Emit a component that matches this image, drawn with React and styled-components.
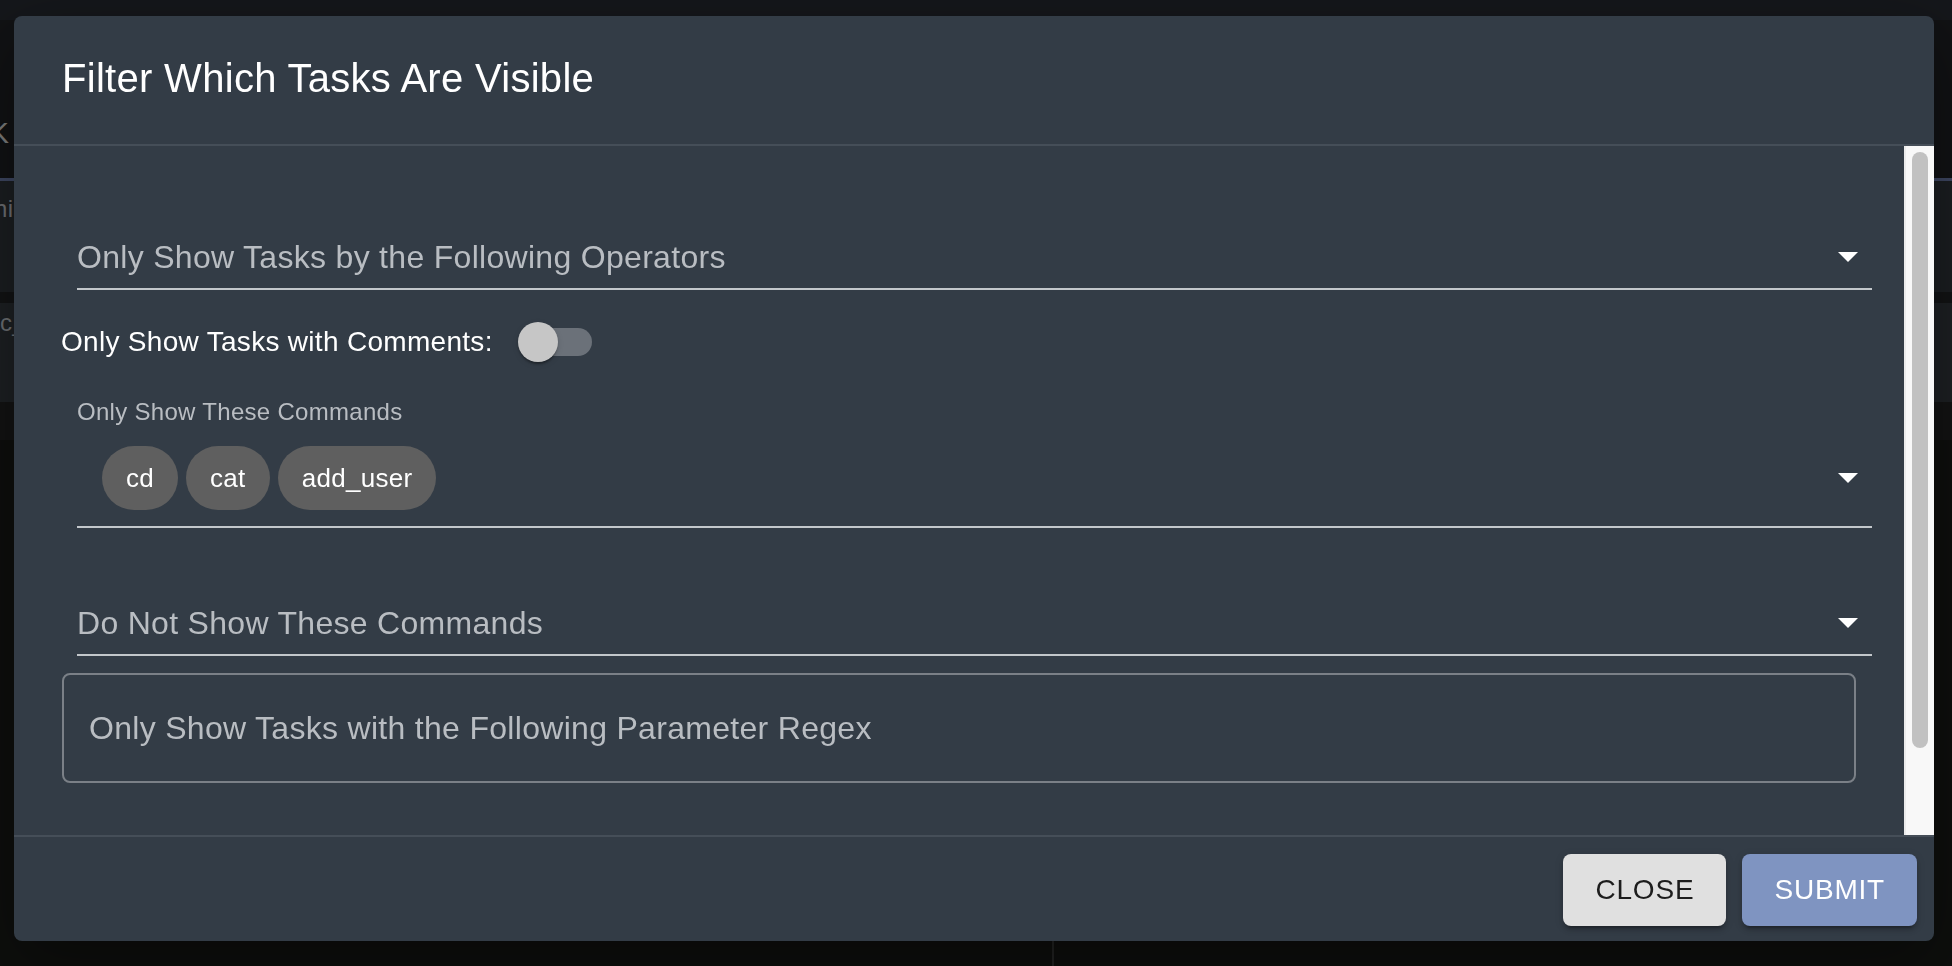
import React from 'react'
import styled, { createGlobalStyle } from 'styled-components'

const GlobalStyle = createGlobalStyle`
    html, body {
        margin: 0;
        padding: 0;
        height: 100%;
    }

    body {
        background: #0e0f0d;
        font-family: "Liberation Sans", Arial, sans-serif;
        letter-spacing: 0.3px;
        overflow: hidden;
    }
`

// the app behind the backdrop
const Page = styled.div`
    display: flex;
    flex-direction: column;
    height: 100vh;
`

const Band = styled.div`
    height: ${p => p.$h}px;
    background: ${p => p.$bg};
    padding-top: ${p => p.$pt || 0}px;
    box-sizing: border-box;
    overflow: hidden;
`

const BgText = styled.div`
    font-size: ${p => p.$size || 24}px;
    line-height: 1;
    color: ${p => p.$color || '#6d7074'};
    margin-left: ${p => p.$offset || 0}px;
    white-space: nowrap;
`

const Lower = styled.div`
    flex: 1;
    display: grid;
    grid-template-columns: 1054px 1fr;
`

const Column = styled.div`
    border-right: ${p => (p.$divider ? '2px solid #222322' : 'none')};
`

// dialog
const Dialog = styled.div`
    position: fixed;
    top: 16px;
    left: 14px;
    width: 1920px;
    height: 925px;
    display: flex;
    flex-direction: column;
    background: #333c46;
    border-radius: 8px;
    overflow: hidden;
    box-shadow: 0 22px 70px rgba(0, 0, 0, 0.4);
`

const Title = styled.h2`
    margin: 0;
    height: 128px;
    box-sizing: border-box;
    padding: 0 48px 4px;
    display: flex;
    align-items: center;
    font-size: 40px;
    font-weight: 400;
    color: #ffffff;
`

const Divider = styled.div`
    height: 2px;
    background: #454e58;
    flex-shrink: 0;
`

const Body = styled.div`
    flex: 1;
    min-height: 0;
    display: flex;
`

const Content = styled.div`
    flex: 1;
    min-width: 0;
    display: flex;
    flex-direction: column;
    padding: 32px 48px;
    overflow: hidden;
`

const ScrollTrack = styled.div`
    width: 30px;
    flex-shrink: 0;
    box-sizing: border-box;
    background: #f8f8f8;
    border-left: 2px solid #ebebeb;
    padding: 6px 6px 0 6px;
`

const ScrollThumb = styled.div`
    height: 596px;
    background: #c1c1c1;
    border-radius: 8px;
`

const UnderlineField = styled.div`
    margin: ${p => p.$mt}px -16px 0 15px;
    padding: 40px 0 8px;
    border-bottom: 2px solid #c3c7cb;
    display: flex;
    align-items: center;
    flex-shrink: 0;
`

const Placeholder = styled.div`
    flex: 1;
    font-size: 32px;
    line-height: 46px;
    color: #b9bdc2;
`

const Arrow = styled.svg`
    width: 20px;
    height: 10px;
    margin-right: 14px;
    flex-shrink: 0;
`

const SwitchRow = styled.label`
    margin-top: 14px;
    height: 76px;
    display: flex;
    align-items: center;
    flex-shrink: 0;
    margin-left: -1px;
`

const SwitchLabel = styled.span`
    font-size: 28px;
    color: #ffffff;
`

const Switch = styled.span`
    position: relative;
    width: 68px;
    height: 28px;
    margin-left: 31px;
    border-radius: 14px;
    background: #6b7179;

    &::after {
        content: '';
        position: absolute;
        left: -6px;
        top: -6px;
        width: 40px;
        height: 40px;
        border-radius: 50%;
        background: #c6c6c6;
        box-shadow: 0 4px 2px -2px rgba(0, 0, 0, 0.2), 0 2px 2px 0 rgba(0, 0, 0, 0.14), 0 2px 6px 0 rgba(0, 0, 0, 0.12);
    }
`

const ChipField = styled.div`
    margin: 20px -16px 0 15px;
    padding-bottom: 16px;
    border-bottom: 2px solid #c3c7cb;
    display: flex;
    flex-direction: column;
    flex-shrink: 0;
`

const ShrunkLabel = styled.div`
    font-size: 24px;
    line-height: 24px;
    color: #b9bdc2;
`

const ChipRow = styled.div`
    margin-top: 22px;
    padding-left: 25px;
    display: flex;
    align-items: center;
    gap: 8px;
`

const Chip = styled.span`
    height: 64px;
    padding: 0 24px;
    border-radius: 32px;
    background: #5f5f5f;
    color: #ffffff;
    font-size: 26px;
    display: flex;
    align-items: center;
`

const Spacer = styled.div`
    flex: 1;
`

const OutlinedField = styled.div`
    margin-top: 17px;
    height: 110px;
    box-sizing: border-box;
    border: 2px solid #7b8087;
    border-radius: 8px;
    padding: 0 25px;
    display: flex;
    align-items: center;
    flex-shrink: 0;
    font-size: 32px;
    color: #b9bdc2;
`

const Actions = styled.div`
    height: 104px;
    box-sizing: border-box;
    padding: 17px 17px 0 0;
    display: flex;
    justify-content: flex-end;
    align-items: flex-start;
    gap: 16px;
    flex-shrink: 0;
`

const Button = styled.button`
    height: 72px;
    padding: 0 32px;
    border: none;
    border-radius: 8px;
    font-family: inherit;
    font-size: 28px;
    letter-spacing: 0.8px;
    text-transform: uppercase;
    background: ${p => (p.$primary ? '#7f94c1' : '#e0e0e0')};
    color: ${p => (p.$primary ? '#ffffff' : 'rgba(0, 0, 0, 0.87)')};
    box-shadow: 0 6px 2px -4px rgba(0, 0, 0, 0.2), 0 4px 4px 0 rgba(0, 0, 0, 0.14), 0 2px 10px 0 rgba(0, 0, 0, 0.12);
    cursor: pointer;
`

function DropArrow() {
    return (
        <Arrow viewBox="0 0 20 10">
            <path d="M0 0 L20 0 L10 10 Z" fill="#ffffff" />
        </Arrow>
    )
}

const commands = ['cd', 'cat', 'add_user']

export default function App() {
    return (
        <>
            <GlobalStyle />
            <Page>
                <Band $h={20} $bg="#15171b" />
                <Band $h={158} $bg="#111214" $pt={98}>
                    <BgText $size={30} $offset={-11} $color="#7c7c7c">K</BgText>
                </Band>
                <Band $h={3} $bg="#3e4762" />
                <Band $h={111} $bg="#1b1e21" $pt={16}>
                    <BgText $offset={-6}>hi</BgText>
                </Band>
                <Band $h={11} $bg="#121314" />
                <Band $h={99} $bg="#1d2023" $pt={8}>
                    <BgText>c_</BgText>
                </Band>
                <Band $h={38} $bg="#131313" />
                <Lower>
                    <Column $divider />
                    <Column />
                </Lower>
            </Page>

            <Dialog>
                <Title>Filter Which Tasks Are Visible</Title>
                <Divider />
                <Body>
                    <Content>
                        <UnderlineField $mt={16}>
                            <Placeholder>Only Show Tasks by the Following Operators</Placeholder>
                            <DropArrow />
                        </UnderlineField>

                        <SwitchRow>
                            <SwitchLabel>Only Show Tasks with Comments:</SwitchLabel>
                            <Switch />
                        </SwitchRow>

                        <ChipField>
                            <ShrunkLabel>Only Show These Commands</ShrunkLabel>
                            <ChipRow>
                                {commands.map(c => <Chip key={c}>{c}</Chip>)}
                                <Spacer />
                                <DropArrow />
                            </ChipRow>
                        </ChipField>

                        <UnderlineField $mt={32}>
                            <Placeholder>Do Not Show These Commands</Placeholder>
                            <DropArrow />
                        </UnderlineField>

                        <OutlinedField>Only Show Tasks with the Following Parameter Regex</OutlinedField>
                    </Content>
                    <ScrollTrack>
                        <ScrollThumb />
                    </ScrollTrack>
                </Body>
                <Divider />
                <Actions>
                    <Button>Close</Button>
                    <Button $primary>Submit</Button>
                </Actions>
            </Dialog>
        </>
    )
}
